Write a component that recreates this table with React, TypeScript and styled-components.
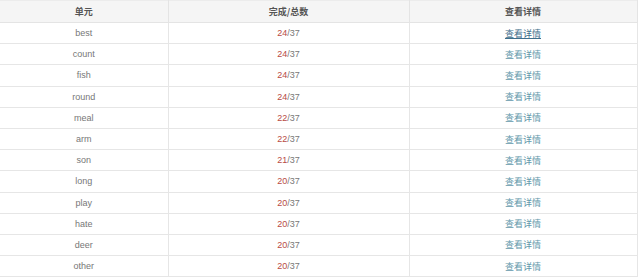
import styled, { createGlobalStyle } from "styled-components";

const GlobalStyle = createGlobalStyle`
  html, body {
    margin: 0;
    padding: 0;
    background: #fff;
  }
  body {
    font-family: "Liberation Sans", "Noto Sans CJK SC", Arial, sans-serif;
  }
`;

interface UnitRow {
  name: string;
  done: number;
  total: number;
}

const rows: UnitRow[] = [
  { name: "best", done: 24, total: 37 },
  { name: "count", done: 24, total: 37 },
  { name: "fish", done: 24, total: 37 },
  { name: "round", done: 24, total: 37 },
  { name: "meal", done: 22, total: 37 },
  { name: "arm", done: 22, total: 37 },
  { name: "son", done: 21, total: 37 },
  { name: "long", done: 20, total: 37 },
  { name: "play", done: 20, total: 37 },
  { name: "hate", done: 20, total: 37 },
  { name: "deer", done: 20, total: 37 },
  { name: "other", done: 20, total: 37 },
];

export default function App() {
  return (
    <>
      <GlobalStyle />
      <Table>
        <colgroup>
          <col style={{ width: 168 }} />
          <col style={{ width: 241 }} />
          <col style={{ width: 228 }} />
        </colgroup>
        <thead>
          <tr>
            <HeadCell>单元</HeadCell>
            <HeadCell>完成/总数</HeadCell>
            <HeadCell>查看详情</HeadCell>
          </tr>
        </thead>
        <tbody>
          {rows.map((row, i) => (
            <tr key={row.name}>
              <Cell>{row.name}</Cell>
              <Cell>
                <Done>{row.done}</Done>/{row.total}
              </Cell>
              <Cell>
                <DetailLink href="#" $active={i === 0}>
                  查看详情
                </DetailLink>
              </Cell>
            </tr>
          ))}
        </tbody>
      </Table>
    </>
  );
}

const Table = styled.table`
  width: 637px;
  border-collapse: collapse;
  table-layout: fixed;
  font-size: 9px;
  color: #777;
`;

const HeadCell = styled.th`
  height: 21px;
  padding: 0;
  background: #f5f5f5;
  border: 1px solid #e4e4e4;
  border-left: none;
  border-top: 1px solid #ececec;
  font-family: "Noto Sans CJK SC", sans-serif;
  font-weight: 700;
  font-size: 9px;
  color: #555;
  text-align: center;
  vertical-align: middle;

  &:last-child {
    border-right: 1px solid #e4e4e4;
  }
`;

const Cell = styled.td`
  height: 20.2px;
  padding: 0;
  border-bottom: 1px solid #e6e6e6;
  border-right: 1px solid #e6e6e6;
  text-align: center;
  vertical-align: middle;
  white-space: nowrap;
`;

const Done = styled.span`
  color: #b84a44;
`;

const DetailLink = styled.a<{ $active?: boolean }>`
  font-family: "Noto Sans CJK SC", sans-serif;
  font-size: 9px;
  color: ${({ $active }) => ($active ? "#3f6f8c" : "#6298ab")};
  text-decoration: ${({ $active }) => ($active ? "underline" : "none")};
`;
